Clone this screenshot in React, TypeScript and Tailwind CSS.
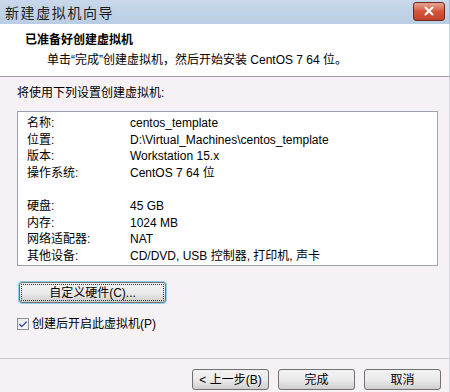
import { Check, X } from 'lucide-react'

const font = { fontFamily: '"Liberation Sans", "Noto Sans CJK SC", sans-serif' }

const rows: [string, string][] = [
  ['名称:', 'centos_template'],
  ['位置:', 'D:\\Virtual_Machines\\centos_template'],
  ['版本:', 'Workstation 15.x'],
  ['操作系统:', 'CentOS 7 64 位'],
  ['', ''],
  ['硬盘:', '45 GB'],
  ['内存:', '1024 MB'],
  ['网络适配器:', 'NAT'],
  ['其他设备:', 'CD/DVD, USB 控制器, 打印机, 声卡'],
]

function WinButton({ label, className = '' }: { label: string; className?: string }) {
  return (
    <button
      className={`h-[21px] rounded-[3px] border border-[#707070] bg-gradient-to-b from-[#f2f2f2] via-[#ebebeb] to-[#cfcfcf] text-[12px] text-black ${className}`}
    >
      {label}
    </button>
  )
}

export default function App() {
  return (
    <div className="w-[450px] h-[392px] flex flex-col bg-[#f5f1f5] text-black text-[12px] overflow-hidden" style={font}>
      {/* Title bar */}
      <div className="h-[24px] shrink-0 flex items-center justify-between pl-[5px] pr-[4px] bg-gradient-to-b from-[#c9d8ea] to-[#b9cde4] border-r border-[#a9bcd4]">
        <span className="text-[14px] tracking-[1.6px] text-[#1a1a1a]" style={{ fontFamily: '"Noto Sans CJK SC", serif' }}>新建虚拟机向导</span>
        <div className="w-[32px] h-[19px] mt-[-2px] rounded-[3px] border border-[#6b2a20] bg-gradient-to-b from-[#e8a392] via-[#d4553c] to-[#c2412a] flex items-center justify-center">
          <X size={14} strokeWidth={3.5} className="text-white" />
        </div>
      </div>

      {/* Header */}
      <div className="h-[53px] shrink-0 bg-white border-b border-[#a0a0a0] border-r border-r-[#c8d2de] pt-[7px]">
        <div className="pl-[25px] font-bold leading-[18px]">已准备好创建虚拟机</div>
        <div className="pl-[47px] leading-[18px] mt-[2px]">单击“完成”创建虚拟机，然后开始安装 CentOS 7 64 位。</div>
      </div>

      {/* Body */}
      <div className="flex-1 flex flex-col border-r border-[#d6d6e0] px-[17px]">
        <div className="mt-[8px] leading-[16px]">将使用下列设置创建虚拟机:</div>
        <div className="mt-[10px] w-[421px] h-[155px] bg-white border border-[#a0a0b0] pt-[3px] pl-[9px]">
          {rows.map(([k, v], i) => (
            <div key={i} className="flex h-[16.6px] leading-[16.6px]">
              <span className="w-[103px]">{k}</span>
              <span>{v}</span>
            </div>
          ))}
        </div>
        <WinButton label="自定义硬件(C)..." className="mt-[16px] ml-[2px] w-[147px] outline outline-1 outline-dotted outline-offset-[-3px] outline-[#333] shadow-[0_0_0_1px_#8fd0ef]" />
        <label className="mt-[13px] flex items-center gap-[3px] leading-[16px]">
          <span className="w-[12px] h-[12px] border border-[#8f8f8f] bg-gradient-to-br from-[#e4e8f4] to-white flex items-center justify-center">
            <Check size={11} strokeWidth={3} className="text-[#2b41a8]" />
          </span>
          创建后开启此虚拟机(P)
        </label>
      </div>

      {/* Footer */}
      <div className="h-[34px] shrink-0 border-t border-[#c8c8cc] border-r border-r-[#d6d6e0] flex items-start justify-end gap-[9px] pt-[10px] pr-[8px]">
        <WinButton label="< 上一步(B)" className="w-[77px]" />
        <WinButton label="完成" className="w-[77px]" />
        <WinButton label="取消" className="w-[77px]" />
      </div>
    </div>
  )
}
